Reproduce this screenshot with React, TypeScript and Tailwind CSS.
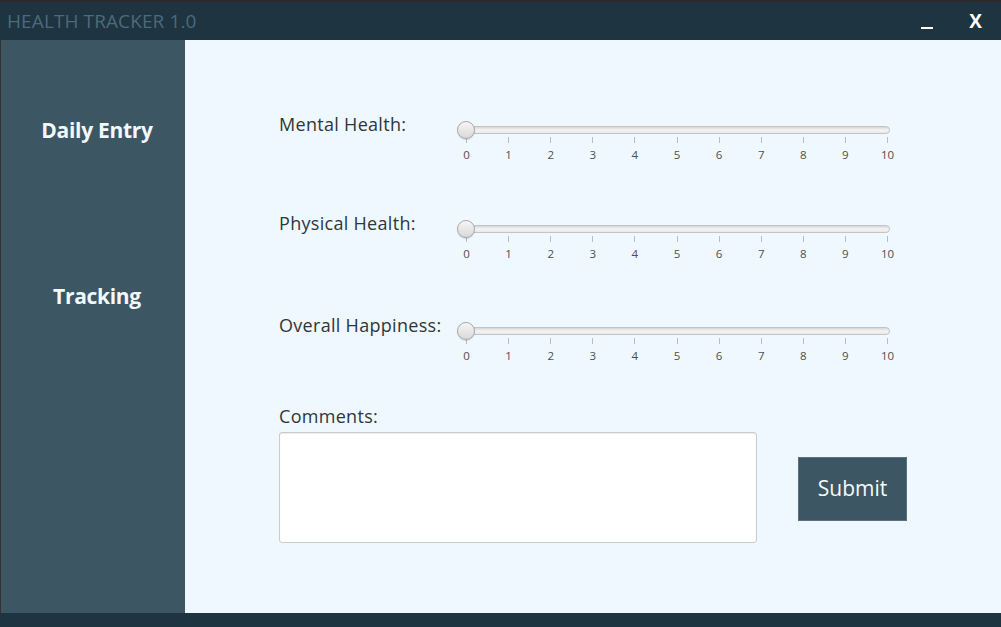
import React from "react";

const ticks = [0, 1, 2, 3, 4, 5, 6, 7, 8, 9, 10];

function Slider() {
  return (
    <div className="relative w-[440px] h-[50px]">
      <div className="absolute left-[4px] w-[429px] top-[12px] h-[8px] rounded-full border border-[#c4c4c4] bg-gradient-to-b from-[#d6d6d6] via-[#f4f4f4] to-[#e8e8e8]" />
      {ticks.map((t) => (
        <div
          key={t}
          className="absolute top-[23px] h-[6px] w-px bg-[#b8bcc0]"
          style={{ left: 9 + t * 42.1 }}
        />
      ))}
      {ticks.map((t) => (
        <div
          key={"l" + t}
          className="absolute top-[34px] w-[20px] -ml-[10px] text-center text-[11.5px] leading-[14px] text-[#4f4f4f]"
          style={{ left: 9.5 + t * 42.1 }}
        >
          {t}
        </div>
      ))}
      <div className="absolute left-0 top-[7px] h-[18px] w-[18px] rounded-full border border-[#a8a8a8] bg-gradient-to-b from-[#f6f6f6] to-[#d9d9d9] shadow-[0_1px_1px_rgba(0,0,0,0.15)]" />
    </div>
  );
}

function Row({ label, className }: { label: string; className: string }) {
  return (
    <div className={"flex items-start " + className}>
      <div className="w-[178px] text-[18px] leading-[20px] text-[#2f363c] tracking-[0.3px]">{label}</div>
      <Slider />
    </div>
  );
}

export default function App() {
  return (
    <div
      className="w-[1001px] h-[627px] flex flex-col bg-[#1e3440] overflow-hidden"
      style={{ fontFamily: '"Open Sans", "Noto Sans", sans-serif' }}
    >
      <div className="h-[2px] bg-[#2b2b2b]" />
      <div className="h-[38px] flex items-center pl-[7px] pr-[19px] bg-[#1e3440]">
        <div className="text-[19px] text-[#4b6a7c] tracking-[0.1px]">HEALTH TRACKER 1.0</div>
        <div className="ml-auto flex items-center gap-[36px]">
          <div className="w-[12px] h-[2px] bg-white mt-[14px]" />
          <div className="text-[19px] font-bold text-white leading-none">X</div>
        </div>
      </div>
      <div className="flex-1 flex min-h-0">
        <div className="w-[185px] border-l border-[#333] bg-[#3c5763] flex flex-col items-center pt-[77px] pl-[8px]">
          <div className="text-[21px] font-bold text-[#f2f8fb] leading-[26px] tracking-[-0.3px]">Daily Entry</div>
          <div className="mt-[140px] text-[21px] font-bold text-[#f2f8fb] leading-[26px] tracking-[-0.3px]">Tracking</div>
        </div>
        <div className="flex-1 bg-[#eef8fe] pl-[94px] pt-[74px] flex flex-col">
          <Row label="Mental Health:" className="h-[99px]" />
          <Row label="Physical Health:" className="h-[102px]" />
          <Row label="Overall Happiness:" className="h-[91px]" />
          <div className="text-[18px] leading-[20px] text-[#2f363c] tracking-[0.3px]">Comments:</div>
          <div className="mt-[6px] flex items-center">
            <div className="w-[478px] h-[111px] bg-white border border-[#c9cccf] rounded-[3px] shadow-[inset_0_1px_1px_rgba(0,0,0,0.08)]" />
            <button className="ml-[41px] mt-[3px] w-[109px] h-[64px] bg-[#3c5763] text-[#f4f9fc] text-[21px] border border-[#5a7280]">
              Submit
            </button>
          </div>
        </div>
      </div>
      <div className="h-[14px] bg-[#1e3440]" />
    </div>
  );
}
